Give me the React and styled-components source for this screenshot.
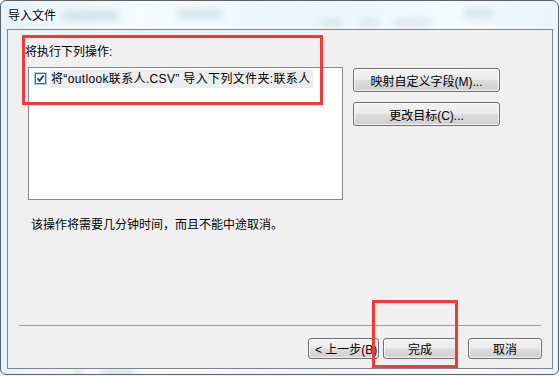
import React from 'react';
import styled, { createGlobalStyle } from 'styled-components';

const GlobalStyle = createGlobalStyle`
  html, body {
    margin: 0;
    padding: 0;
    background: #eef7fb;
  }
  body {
    font-family: "Liberation Sans", "Noto Sans CJK SC", sans-serif;
    font-size: 12px;
    color: #000;
  }
`;

const Page = styled.div`
  position: relative;
  width: 560px;
  height: 376px;
  overflow: hidden;
`;

const Window = styled.div`
  position: relative;
  width: 559px;
  height: 375px;
  box-sizing: border-box;
  border: 1px solid #5c6166;
  border-radius: 6px 7px 6px 6px;
  background: linear-gradient(90deg, #e4f3fa 0%, #f6fbfd 25%, #e9f6fb 55%, #f4fafd 80%, #e8f5fa 100%);
  padding: 0 5px 5px 6px;
  display: flex;
  flex-direction: column;
  overflow: hidden;
`;

const Blur = styled.div`
  position: absolute;
  left: ${p => p.$x}px;
  top: ${p => p.$y}px;
  width: ${p => p.$w}px;
  height: ${p => p.$h}px;
  border-radius: 4px;
  background: ${p => p.$c || '#9fb8c8'};
  opacity: ${p => p.$o || 0.35};
  filter: blur(3px);
`;

const TitleBar = styled.div`
  position: relative;
  height: 28px;
  display: flex;
  align-items: center;
  padding: 0 0 2px 1px;
  box-sizing: border-box;
  font-size: 12px;
  text-shadow: 0 0 6px #fff, 0 0 3px #fff;
`;

const Client = styled.div`
  position: relative;
  flex: 1;
  border: 1px solid #848484;
  background: #f0f0f0;
  display: flex;
  flex-direction: column;
`;

const Heading = styled.div`
  margin: 14px 0 0 17px;
  line-height: 16px;
`;

const MainRow = styled.div`
  margin-top: 7px;
  padding-left: 20px;
  display: flex;
  align-items: flex-start;
  gap: 10px;
`;

const ListBox = styled.div`
  width: 315px;
  height: 133px;
  box-sizing: border-box;
  border: 1px solid #828790;
  background: #fff;
  padding: 2px 0 0 5px;
`;

const ListItem = styled.div`
  display: flex;
  align-items: center;
  height: 18px;
`;

const CheckWrap = styled.span`
  display: flex;
  width: 13px;
  height: 13px;
  margin-top: -2px;
`;

const ItemText = styled.span`
  margin-left: 3px;
  padding: 0 2px 0 1px;
  background: #ededed;
  line-height: 18px;
  letter-spacing: 0.35px;
  white-space: nowrap;
`;

const ButtonColumn = styled.div`
  margin-top: 1px;
  display: flex;
  flex-direction: column;
  gap: 10px;
`;

const Button = styled.button`
  width: ${p => p.$w}px;
  height: ${p => p.$h || 23}px;
  box-sizing: border-box;
  border: 1px solid #707070;
  border-radius: 3px;
  background: linear-gradient(180deg, #f2f2f2 0%, #ebebeb 48%, #dddddd 52%, #cfcfcf 100%);
  box-shadow: inset 0 0 0 1px rgba(255, 255, 255, 0.75);
  font-family: "Liberation Sans", "Noto Sans CJK SC", sans-serif;
  font-size: 12px;
  color: #000;
  padding: 0;
  text-align: ${p => p.$align || 'center'};
  padding-left: ${p => p.$pl || 0}px;
  white-space: nowrap;
  overflow: hidden;
`;

const Note = styled.div`
  margin-top: 17px;
  padding-left: 23px;
  line-height: 16px;
`;

const Spacer = styled.div`
  flex: 1;
`;

const Separator = styled.div`
  margin: 0 11px;
  height: 1px;
  background: #a0a0a0;
`;

const Footer = styled.div`
  margin-top: 12px;
  padding: 0 10px 9px 0;
  display: flex;
  justify-content: flex-end;
`;

const FooterGap = styled.div`
  width: ${p => p.$w}px;
`;

const Annotation = styled.div`
  position: absolute;
  left: ${p => p.$x}px;
  top: ${p => p.$y}px;
  width: ${p => p.$w}px;
  height: ${p => p.$h}px;
  box-sizing: border-box;
  border: 3px solid #f23a3a;
  pointer-events: none;
`;

const CheckIcon = () => (
  <svg width="13" height="13" viewBox="0 0 13 13">
    <rect x="0" y="0" width="13" height="13" fill="#a9d3f5" />
    <rect x="1.5" y="1.5" width="10" height="10" fill="#f3f8fd" stroke="#2c6aa3" />
    <path d="M3.6 6.4 L5.6 8.8 L9.6 3.6" fill="none" stroke="#1a3c70" strokeWidth="1.7" />
  </svg>
);

const App = () => {
  return (
    <Page>
      <GlobalStyle />
      <Window>
        <Blur $x={62} $y={10} $w={56} $h={9} />
        <Blur $x={176} $y={9} $w={46} $h={8} />
        <Blur $x={320} $y={18} $w={22} $h={7} $o={0.25} />
        <Blur $x={358} $y={18} $w={20} $h={7} $o={0.25} />
        <Blur $x={392} $y={18} $w={40} $h={7} $o={0.25} />
        <Blur $x={462} $y={8} $w={30} $h={9} $o={0.3} />
        <Blur $x={74} $y={369} $w={6} $h={6} $c="#6fb6e6" $o={0.5} />
        <Blur $x={100} $y={369} $w={34} $h={6} $c="#6fb6e6" $o={0.4} />
        <TitleBar>导入文件</TitleBar>
        <Client>
          <Heading>将执行下列操作:</Heading>
          <MainRow>
            <ListBox>
              <ListItem>
                <CheckWrap>
                  <CheckIcon />
                </CheckWrap>
                <ItemText>将“outlook联系人.CSV” 导入下列文件夹:联系人</ItemText>
              </ListItem>
            </ListBox>
            <ButtonColumn>
              <Button $w={147} $h={24}>映射自定义字段(M)...</Button>
              <Button $w={147} $h={24}>更改目标(C)...</Button>
            </ButtonColumn>
          </MainRow>
          <Note>该操作将需要几分钟时间，而且不能中途取消。</Note>
          <Spacer />
          <Separator />
          <Footer>
            <Button $w={71} $h={21} $align="left" $pl={6}>&lt; 上一步(B)</Button>
            <FooterGap $w={4} />
            <Button $w={74} $h={21}>完成</Button>
            <FooterGap $w={11} />
            <Button $w={74} $h={21}>取消</Button>
          </Footer>
        </Client>
      </Window>
      <Annotation $x={22} $y={35} $w={301} $h={70} />
      <Annotation $x={372} $y={300} $w={86} $h={68} />
    </Page>
  );
};

export default App;
